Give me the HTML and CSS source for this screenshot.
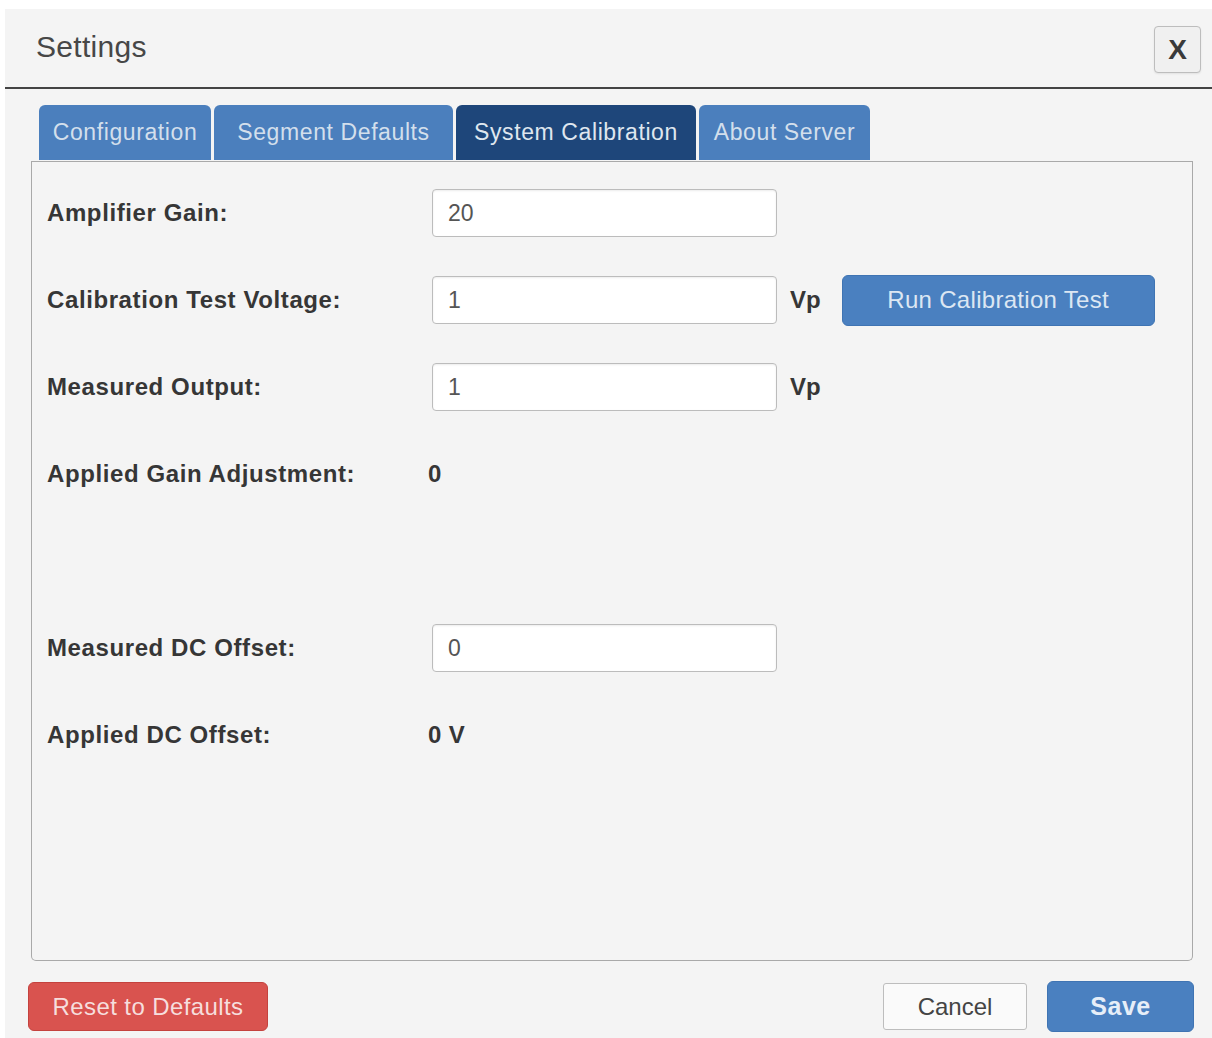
FILE: index.html
```html
<!DOCTYPE html>
<html lang="en">
<head>
<meta charset="utf-8">
<title>Settings</title>
<link rel="stylesheet" href="styles.css">
</head>
<body>
<div class="dialog">
  <div class="dialog-header">
    <h4 class="dialog-title">Settings</h4>
    <button class="close-btn" type="button">X</button>
  </div>

  <div class="dialog-body">
    <div class="tabs-row">
      <a class="tab tab-config">Configuration</a>
      <a class="tab tab-segment">Segment Defaults</a>
      <a class="tab tab-calibration active">System Calibration</a>
      <a class="tab tab-about">About Server</a>
    </div>

    <div class="panel">
      <div class="form-grid">
        <div class="field-label">Amplifier Gain:</div>
        <div class="field-value"><input class="text-input" type="text" value="20"></div>

        <div class="field-label">Calibration Test Voltage:</div>
        <div class="field-value">
          <input class="text-input" type="text" value="1">
          <span class="unit">Vp</span>
          <button class="btn btn-primary btn-run" type="button">Run Calibration Test</button>
        </div>

        <div class="field-label">Measured Output:</div>
        <div class="field-value">
          <input class="text-input" type="text" value="1">
          <span class="unit">Vp</span>
        </div>

        <div class="field-label">Applied Gain Adjustment:</div>
        <div class="field-value"><span class="static-value">0</span></div>

        <div class="field-label"></div>
        <div class="field-value"></div>

        <div class="field-label">Measured DC Offset:</div>
        <div class="field-value"><input class="text-input" type="text" value="0"></div>

        <div class="field-label">Applied DC Offset:</div>
        <div class="field-value"><span class="static-value">0 V</span></div>
      </div>
    </div>
  </div>

  <div class="dialog-footer">
    <button class="btn btn-danger btn-reset" type="button">Reset to Defaults</button>
    <div class="footer-right">
      <button class="btn btn-default btn-cancel" type="button">Cancel</button>
      <button class="btn btn-primary btn-save" type="button">Save</button>
    </div>
  </div>
</div>
</body>
</html>
```

FILE: styles.css
```css
html, body {
  margin: 0;
  padding: 0;
  background: #ffffff;
}

body {
  font-family: "Liberation Sans", Arial, sans-serif;
  color: #333;
}

.dialog {
  margin: 9px 0 0 5px;
  height: 1029px;
  background: #f4f4f4;
  overflow: hidden;
}

/* Header with title and close box */
.dialog-header {
  height: 78px;
  border-bottom: 2px solid #444;
  display: flex;
  align-items: center;
  justify-content: space-between;
  padding: 0 11px 0 31px;
}

.dialog-title {
  margin: 0;
  font-size: 30px;
  font-weight: normal;
  color: #474747;
  letter-spacing: 0.3px;
  padding-bottom: 2px;
}

.close-btn {
  width: 47px;
  height: 47px;
  margin-top: 3px;
  border: 1px solid #bdbdbd;
  border-radius: 4px;
  background: #f0f0f0;
  font-family: "Liberation Sans", Arial, sans-serif;
  font-weight: bold;
  font-size: 28px;
  color: #3a3a3a;
  padding: 0;
  box-shadow: 0 1px 2px rgba(0,0,0,0.08);
}

/* Body: tabs + panel */
.dialog-body {
  padding: 16px 19px 0 26px;
}

.tabs-row {
  display: flex;
  gap: 3px;
  padding-left: 8px;
  height: 56px;
  border-bottom: 1px solid #a9a9a9;
}

.tab {
  display: flex;
  align-items: center;
  justify-content: center;
  height: 55px;
  background: #4b7fbd;
  color: #d3dfec;
  font-size: 23px;
  letter-spacing: 0.6px;
  border-radius: 6px 6px 0 0;
  white-space: nowrap;
}

.tab.active {
  background: #1e467a;
  color: #dfe6ef;
}

.tab-config { width: 172px; }
.tab-segment { width: 239px; }
.tab-calibration { width: 240px; }
.tab-about { width: 171px; }

.panel {
  height: 799px;
  border: 1px solid #a9a9a9;
  border-top: 0;
  border-radius: 0 0 5px 5px;
  box-sizing: border-box;
  padding: 27px 15px 0 15px;
}

.form-grid {
  display: grid;
  grid-template-columns: 385px 1fr;
  grid-auto-rows: 48px;
  row-gap: 39px;
  align-items: center;
}

.field-label {
  font-weight: bold;
  font-size: 24px;
  letter-spacing: 0.6px;
  color: #363636;
  white-space: nowrap;
}

.field-value {
  display: flex;
  align-items: center;
  height: 48px;
}

.static-value {
  font-weight: bold;
  font-size: 24px;
  letter-spacing: 0.4px;
  color: #363636;
  margin-left: -4px;
}

.text-input {
  width: 345px;
  height: 48px;
  box-sizing: border-box;
  border: 1px solid #bcbcbc;
  border-radius: 4px;
  background: #fff;
  box-shadow: inset 0 1px 2px rgba(0,0,0,0.08);
  padding: 0 15px;
  font-family: "Liberation Sans", Arial, sans-serif;
  font-size: 23px;
  color: #555;
  outline: none;
}

.unit {
  font-weight: bold;
  font-size: 24px;
  color: #363636;
  margin-left: 13px;
}

/* Buttons */
.btn {
  font-family: "Liberation Sans", Arial, sans-serif;
  font-size: 24px;
  border-radius: 6px;
  padding: 0;
  cursor: pointer;
}

.btn-primary {
  background: #4a80c0;
  border: 1px solid #3f74b3;
  color: #dce7f3;
}

.btn-danger {
  background: #d9534f;
  border: 1px solid #c4423e;
  color: #f6dedd;
}

.btn-default {
  background: #fafafa;
  border: 1px solid #bdbdbd;
  color: #444;
}

.btn-run {
  width: 313px;
  height: 51px;
  margin-left: 21px;
  letter-spacing: 0.3px;
}

/* Footer */
.dialog-footer {
  display: flex;
  justify-content: space-between;
  align-items: center;
  padding: 20px 18px 0 23px;
}

.btn-reset {
  width: 240px;
  height: 49px;
  letter-spacing: 0.4px;
}

.footer-right {
  display: flex;
  align-items: center;
  gap: 20px;
}

.btn-cancel {
  width: 144px;
  height: 47px;
  border-radius: 3px;
}

.btn-save {
  width: 147px;
  height: 51px;
  font-weight: bold;
  font-size: 25px;
  color: #e6eef8;
  letter-spacing: 0.5px;
}
```
